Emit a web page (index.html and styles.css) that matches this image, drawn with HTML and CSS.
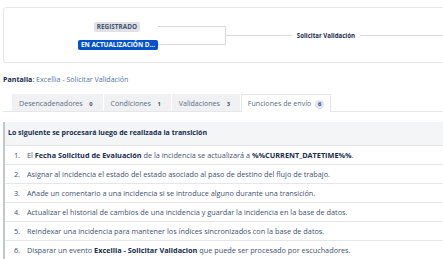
FILE: index.html
```html
<!DOCTYPE html>
<html lang="es">
<head>
<meta charset="utf-8">
<link rel="stylesheet" href="styles.css">
</head>
<body>
<div class="page">
  <div class="diagram">
    <div class="sources">
      <span class="lozenge gray">REGISTRADO</span>
      <span class="lozenge blue">EN ACTUALIZACIÓN D...</span>
    </div>
    <div class="bracket"></div>
    <div class="flow">
      <span class="line"></span>
      <span class="trans">Solicitar Validación</span>
      <span class="line end"></span>
    </div>
  </div>
  <p class="screen"><b>Pantalla</b>: <a>Excellia - Solicitar Validación</a></p>
  <div class="tabs">
    <div class="tab">Desencadenadores <span class="badge">0</span></div>
    <div class="tab">Condiciones <span class="badge">1</span></div>
    <div class="tab">Validaciones <span class="badge">3</span></div>
    <div class="tab active">Funciones de envío <span class="badge">6</span></div>
  </div>
  <div class="panel">
    <div class="head">Lo siguiente se procesará luego de realizada la transición</div>
    <ol class="list">
      <li>El <b>Fecha Solicitud de Evaluación</b> de la incidencia se actualizará a <b>%%CURRENT_DATETIME%%</b>.</li>
      <li>Asignar al incidencia el estado del estado asociado al paso de destino del flujo de trabajo.</li>
      <li>Añade un comentario a una incidencia si se introduce alguno durante una transición.</li>
      <li>Actualizar el historial de cambios de una incidencia y guardar la incidencia en la base de datos.</li>
      <li>Reindexar una incidencia para mantener los índices sincronizados con la base de datos.</li>
      <li>Disparar un evento <b>Excellia - Solicitar Validacion</b> que puede ser procesado por escuchadores.</li>
    </ol>
  </div>
</div>
</body>
</html>
```

FILE: styles.css
```css
html, body { margin: 0; padding: 0; background: #fff; overflow: hidden; }
body {
  font-family: "Open Sans", "Noto Sans", sans-serif;
  font-size: 7px;
  color: #172b4d;
}
.page { width: 470px; padding: 7px 0 0 3px; }
.diagram {
  height: 56px;
  border: 1px solid #e4e6ea;
  border-radius: 3px;
  display: flex;
  align-items: center;
  box-sizing: border-box;
}
.sources {
  width: 154px;
  display: flex;
  flex-direction: column;
  align-items: flex-end;
  gap: 8px;
  padding-top: 2px;
}
.lozenge {
  font-size: 6.4px;
  font-weight: 700;
  line-height: 10px;
  height: 10px;
  padding: 0 3px;
  border-radius: 2px;
  text-transform: uppercase;
}
.lozenge.gray { background: #dfe1e6; color: #42526e; margin-right: 18px; }
.lozenge.blue { background: #0052cc; color: #fff; }
.bracket {
  width: 67px;
  height: 17px;
  border: 1px solid #d7d9dd;
  border-left: 0;
  margin-top: 1px;
}
.flow {
  flex: 1;
  display: flex;
  align-items: center;
  gap: 5px;
  margin-top: 1px;
}
.line { flex: 1; height: 1px; background: #d7d9dd; }
.line.end { flex: 0 0 112px; }
.trans { font-weight: 700; color: #172b4d; font-size: 6.1px; }
.screen { margin: 11px 0 0 0; font-size: 7.1px; line-height: 10px; color: #172b4d; }
.screen a { color: #5276ad; }
.tabs {
  margin-top: 10px;
  display: flex;
  padding-left: 9px;
  border-bottom: 1px solid #e4e6ea;
  gap: 1px;
}
.tab {
  height: 16px;
  line-height: 16px;
  padding: 0 6px;
  background: #f0f1f3;
  color: #5e6c84;
  font-size: 7.1px;
  white-space: nowrap;
  border: 1px solid #f0f1f3;
  border-bottom: 0;
}
.tab.active { background: #fff; border-color: #e4e6ea; margin-bottom: -1px; height: 17px; }
.badge {
  display: inline-block;
  min-width: 9px;
  height: 9px;
  line-height: 9px;
  text-align: center;
  border-radius: 5px;
  font-size: 5.8px;
  font-weight: 700;
  color: #42526e;
  background: transparent;
  margin-left: 2px;
}
.tab.active .badge { background: #dfe1f3; color: #42526e; }
.panel {
  margin-top: 10px;
  border-left: 2px solid #c1c7d0;
}
.head {
  background: #f4f5f7;
  font-weight: 700;
  font-size: 7px;
  height: 23px;
  line-height: 22px;
  padding-left: 3px;
  border-bottom: 1px solid #e4e6ea;
}
.list { margin: 0; padding: 0; list-style: none; counter-reset: item; color: #42526e; }
.list li {
  counter-increment: item;
  font-size: 7.3px;
  height: 18px;
  line-height: 18px;
  border-bottom: 1px solid #e4e6ea;
  white-space: nowrap;
}
.list li::before {
  content: counter(item) ".";
  display: inline-block;
  width: 15px;
  text-align: right;
  margin-right: 7px;
}
.list b { color: #172b4d; }
```
